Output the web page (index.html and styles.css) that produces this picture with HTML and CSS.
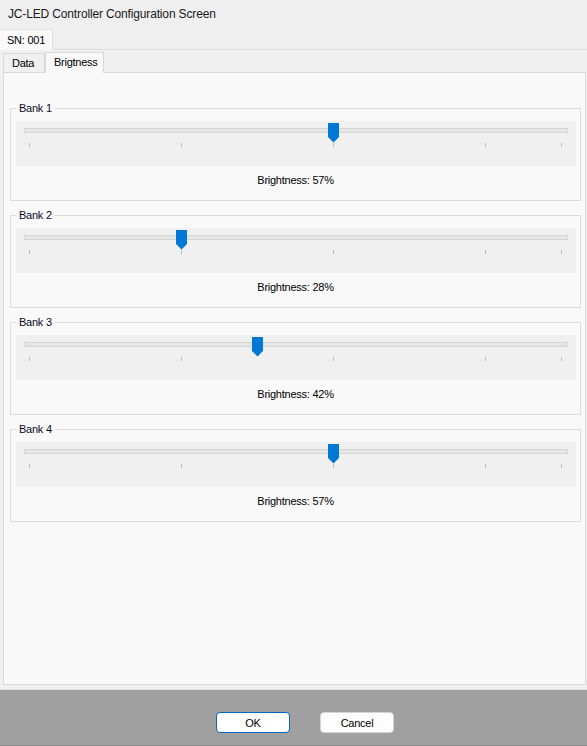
FILE: index.html
```html
<!DOCTYPE html>
<html>
<head>
<meta charset="utf-8">
<title>JC-LED Controller Configuration Screen</title>
<link rel="stylesheet" href="styles.css">
</head>
<body>
<div class="window">
  <div class="titlebar">JC-LED Controller Configuration Screen</div>
  <div class="outer-strip"><div class="otab">SN: 001</div></div>
  <div class="outer-page">
    <div class="inner-strip">
      <div class="itab">Data</div>
      <div class="itab active">Brigtness</div>
    </div>
    <div class="panel">
      <div class="group">
        <span class="legend">Bank 1</span>
        <div class="trackbar">
          <div class="track"></div>
          <div class="ticks"><i></i><i></i><i></i><i></i><i></i></div>
          <svg class="thumb" style="left:312px" width="11" height="20" viewBox="0 0 11 20"><path d="M0 0H11V14L5.5 19.5L0 14Z"/></svg>
        </div>
        <div class="value">Brightness: 57%</div>
      </div>
      <div class="group">
        <span class="legend">Bank 2</span>
        <div class="trackbar">
          <div class="track"></div>
          <div class="ticks"><i></i><i></i><i></i><i></i><i></i></div>
          <svg class="thumb" style="left:160px" width="11" height="20" viewBox="0 0 11 20"><path d="M0 0H11V14L5.5 19.5L0 14Z"/></svg>
        </div>
        <div class="value">Brightness: 28%</div>
      </div>
      <div class="group">
        <span class="legend">Bank 3</span>
        <div class="trackbar">
          <div class="track"></div>
          <div class="ticks"><i></i><i></i><i></i><i></i><i></i></div>
          <svg class="thumb" style="left:236px" width="11" height="20" viewBox="0 0 11 20"><path d="M0 0H11V14L5.5 19.5L0 14Z"/></svg>
        </div>
        <div class="value">Brightness: 42%</div>
      </div>
      <div class="group">
        <span class="legend">Bank 4</span>
        <div class="trackbar">
          <div class="track"></div>
          <div class="ticks"><i></i><i></i><i></i><i></i><i></i></div>
          <svg class="thumb" style="left:312px" width="11" height="20" viewBox="0 0 11 20"><path d="M0 0H11V14L5.5 19.5L0 14Z"/></svg>
        </div>
        <div class="value">Brightness: 57%</div>
      </div>
    </div>
  </div>
  <div class="footer">
    <button class="btn ok">OK</button>
    <button class="btn">Cancel</button>
  </div>
</div>
</body>
</html>
```

FILE: styles.css
```css
* { box-sizing: border-box; }
html, body { margin: 0; padding: 0; }
body {
  width: 587px;
  height: 746px;
  background: #efefef;
  font-family: "Liberation Sans", Arial, sans-serif;
  font-size: 11px;
  letter-spacing: -0.25px;
  color: #000;
  overflow: hidden;
}
.window {
  display: flex;
  flex-direction: column;
  height: 746px;
}
.titlebar {
  height: 29px;
  line-height: 29px;
  padding-left: 8px;
  font-size: 12px;
  letter-spacing: -0.15px;
  color: #1a1a1a;
  background: #efefef;
}
.outer-strip {
  height: 21px;
  display: flex;
  border-bottom: 1px solid #dcdcdc;
  background: #efefef;
}
.otab {
  width: 53px;
  height: 21px;
  line-height: 20px;
  padding-left: 7px;
  background: #f9f9f9;
  border-right: 1px solid #e0e0e0;
  border-top: 1px solid #e4e4e4;
}
.outer-page {
  flex: 1;
  display: flex;
  flex-direction: column;
  padding-bottom: 4px;
  border-bottom: 1px solid #e2e2e2;
  background: #f0f0f0;
}
.inner-strip {
  height: 22px;
  display: flex;
  align-items: flex-end;
  padding-left: 3px;
}
.itab {
  height: 19px;
  line-height: 18px;
  padding-left: 8px;
  width: 42px;
  border: 1px solid #d9d9d9;
  border-bottom: none;
  background: #f0f0f0;
}
.itab.active {
  position: relative;
  z-index: 1;
  width: 59px;
  height: 21px;
  line-height: 18px;
  margin-bottom: -1px;
  padding-left: 8px;
  background: #f9f9f9;
}
.panel {
  flex: 1;
  margin: 0 1px 0 3px;
  border: 1px solid #dadada;
  background: #f9f9f9;
  padding: 35px 4px 0 6px;
  display: flex;
  flex-direction: column;
  gap: 14px;
}
.group {
  position: relative;
  height: 93px;
  border: 1px solid #dcdcdc;
}
.legend {
  position: absolute;
  top: -7px;
  left: 5px;
  padding: 0 3px;
  line-height: 13px;
  background: #f9f9f9;
  color: #0a0a1e;
}
.trackbar {
  position: relative;
  height: 45px;
  margin: 12px 4px 0 5px;
  background: #f0f0f0;
  overflow: hidden;
}
.track {
  width: 544px;
  height: 5px;
  margin: 7px 0 0 8px;
  border: 1px solid #d6d6d6;
  background: #e6e6e6;
}
.ticks {
  display: grid;
  grid-template-columns: 152px 152px 152px 76px 1px;
  margin-top: 10px;
  padding-left: 13px;
  height: 4px;
}
.ticks i {
  display: block;
  width: 1px;
  height: 4px;
  background: #bdbdbd;
}
.thumb {
  position: absolute;
  top: 2px;
  fill: #0078d4;
}
.value {
  margin-top: 8px;
  line-height: 13px;
  text-align: center;
}
.footer {
  height: 56px;
  background: #a0a0a0;
  display: flex;
  align-items: flex-start;
  gap: 30px;
  padding: 22px 0 0 216px;
  border-bottom: 1px solid #8e8e8e;
}
.btn {
  width: 74px;
  height: 21px;
  padding: 0;
  font-family: "Liberation Sans", Arial, sans-serif;
  font-size: 11px;
  letter-spacing: -0.25px;
  color: #000;
  background: #fdfdfd;
  border: 1px solid #d4d4d4;
  border-radius: 4px;
}
.btn.ok {
  background: #ffffff;
  border-color: #0067c0;
}
```
